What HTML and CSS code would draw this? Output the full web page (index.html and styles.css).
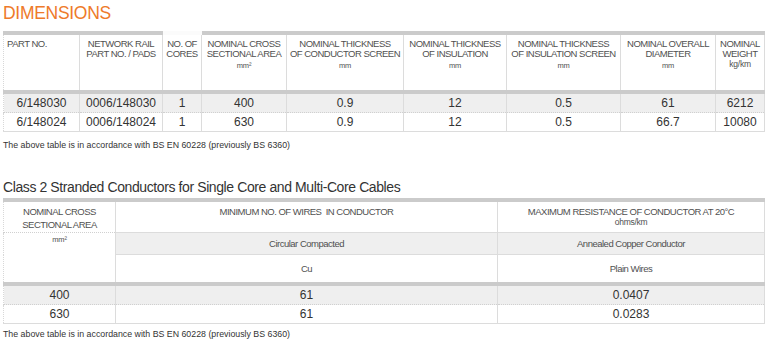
FILE: index.html
```html
<!DOCTYPE html>
<html>
<head>
<meta charset="utf-8">
<link rel="stylesheet" href="styles.css">
</head>
<body>
<h1 class="title">DIMENSIONS</h1>
<table class="dims">
  <colgroup>
    <col style="width:76px"><col style="width:83px"><col style="width:39px"><col style="width:85px"><col style="width:117px"><col style="width:103px"><col style="width:114px"><col style="width:95px"><col style="width:49px">
  </colgroup>
  <thead>
    <tr>
      <th class="left">PART NO.</th>
      <th>NETWORK RAIL<br>PART NO. / PADS</th>
      <th class="cores">NO. OF<br>CORES</th>
      <th>NOMINAL CROSS<br>SECTIONAL AREA<span class="unit">mm²</span></th>
      <th>NOMINAL THICKNESS<br>OF CONDUCTOR SCREEN<span class="unit">mm</span></th>
      <th>NOMINAL THICKNESS<br>OF INSULATION<span class="unit">mm</span></th>
      <th>NOMINAL THICKNESS<br>OF INSULATION SCREEN<span class="unit">mm</span></th>
      <th>NOMINAL OVERALL<br>DIAMETER<span class="unit">mm</span></th>
      <th>NOMINAL<br>WEIGHT<span class="unit kg">kg/km</span></th>
    </tr>
  </thead>
  <tbody>
    <tr class="alt">
      <td>6/148030</td><td>0006/148030</td><td>1</td><td>400</td><td>0.9</td><td>12</td><td>0.5</td><td>61</td><td>6212</td>
    </tr>
    <tr>
      <td>6/148024</td><td>0006/148024</td><td>1</td><td>630</td><td>0.9</td><td>12</td><td>0.5</td><td>66.7</td><td>10080</td>
    </tr>
  </tbody>
</table>
<p class="note note1">The above table is in accordance with BS EN 60228 (previously BS 6360)</p>
<h2 class="subtitle">Class 2 Stranded Conductors for Single Core and Multi-Core Cables</h2>
<table class="cond">
  <colgroup>
    <col style="width:112px"><col style="width:382px"><col style="width:267px">
  </colgroup>
  <thead>
    <tr class="ra">
      <th class="c1a">NOMINAL CROSS<br>SECTIONAL AREA</th>
      <th>MINIMUM NO. OF WIRES &nbsp;IN CONDUCTOR</th>
      <th>MAXIMUM RESISTANCE OF CONDUCTOR AT 20°C<span class="sub">ohms/km</span></th>
    </tr>
    <tr class="rb">
      <th class="c1b" rowspan="2"><span class="unit2">mm²</span></th>
      <th class="grey">Circular Compacted</th>
      <th class="grey">Annealed Copper Conductor</th>
    </tr>
    <tr class="rc">
      <th>Cu</th>
      <th>Plain Wires</th>
    </tr>
  </thead>
  <tbody>
    <tr class="alt"><td>400</td><td>61</td><td>0.0407</td></tr>
    <tr><td>630</td><td>61</td><td>0.0283</td></tr>
  </tbody>
</table>
<p class="note note2">The above table is in accordance with BS EN 60228 (previously BS 6360)</p>
</body>
</html>
```

FILE: styles.css
```css
html, body {
  margin: 0;
  padding: 0;
  background: #fff;
}
body {
  padding: 0 3px;
  font-family: "Liberation Sans", Arial, sans-serif;
  color: #333;
}
.title {
  margin: 3px 0 0;
  font-size: 17.5px;
  line-height: 20px;
  font-weight: normal;
  letter-spacing: -0.3px;
  color: #ee7a2a;
}
table {
  border-collapse: collapse;
  table-layout: fixed;
  width: 761px;
}
.dims {
  margin-top: 8px;
}
th {
  font-weight: normal;
  color: #505050;
  font-size: 9.5px;
  letter-spacing: -0.5px;
  vertical-align: top;
  text-align: center;
}
.dims th {
  line-height: 10px;
  height: 51px;
  padding: 4px 2px 0;
  border-top: 4px solid #cbcbcb;
  border-bottom: 4px solid #cbcbcb;
  border-left: 1px solid #dcdcdc;
  border-right: 1px solid #dcdcdc;
}
.dims th.left {
  text-align: left;
  padding-left: 3px;
  border-left: 1px dotted #d8d8d8;
}
.dims th.cores {
  border-top-color: #fbfbfb;
}
.unit {
  display: block;
  font-size: 7.5px;
  letter-spacing: -0.2px;
  line-height: 10px;
  margin-top: 2px;
}
.unit.kg {
  font-size: 8.5px;
  margin-top: 0;
}
td {
  font-size: 12px;
  line-height: 18px;
  height: 18px;
  padding: 0;
  text-align: center;
  color: #333;
  border-left: 1px solid #dcdcdc;
  border-right: 1px solid #dcdcdc;
  border-bottom: 1px dotted #d0d0d0;
}
td:first-child {
  border-left: 1px dotted #d8d8d8;
}
tbody tr:last-child td {
  border-bottom: 1px solid #dcdcdc;
}
tr.alt td {
  background: #efefef;
}
.note {
  margin: 7px 0 0;
  font-size: 8.8px;
  line-height: 12px;
  color: #333;
}
.subtitle {
  margin: 26px 0 0;
  font-size: 14px;
  letter-spacing: -0.4px;
  line-height: 20px;
  font-weight: normal;
  color: #333;
}
.cond {
  margin-top: 1px;
}
.cond th {
  border-left: 1px solid #dcdcdc;
  border-right: 1px solid #dcdcdc;
  border-bottom: 1px solid #dcdcdc;
  padding: 0 2px;
}
.cond tr.ra th {
  border-top: 4px solid #cbcbcb;
  height: 25px;
  padding-top: 5px;
  line-height: 10px;
}
.cond tr.ra th.c1a {
  line-height: 13px;
  padding-top: 3px;
  height: 27px;
  border-bottom: 1px dotted #d0d0d0;
  border-left: 1px dotted #d8d8d8;
}
.sub {
  display: block;
  font-size: 8.5px;
  letter-spacing: -0.3px;
  line-height: 10px;
}
.cond tr.rb th {
  height: 21px;
  vertical-align: middle;
}
.cond tr.rb th.c1b {
  vertical-align: top;
  border-bottom: 4px solid #cbcbcb;
  border-left: 1px dotted #d8d8d8;
}
.unit2 {
  display: block;
  font-size: 7.5px;
  letter-spacing: -0.2px;
  line-height: 10px;
  padding-top: 2px;
}
.cond th.grey {
  background: #efefef;
}
.cond tr.rc th {
  height: 27px;
  vertical-align: middle;
  border-bottom: 4px solid #cbcbcb;
}
.note2 {
  margin-top: 4px;
}
```
